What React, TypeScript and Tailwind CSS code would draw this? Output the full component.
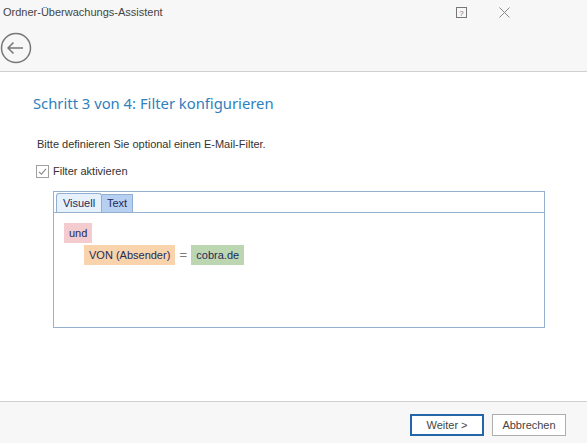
import React from "react";

export default function App() {
  const font = { fontFamily: '"Liberation Sans", Arial, sans-serif' };
  const head = { fontFamily: '"Noto Sans", "Liberation Sans", Arial, sans-serif' };
  return (
    <div className="w-[587px] h-[443px] flex flex-col bg-white text-[#333]" style={font}>
      {/* header */}
      <div className="h-[72px] bg-[#f7f7f7] border-b border-[#d0d0d0] flex flex-col shrink-0">
        <div className="h-[24px] flex items-center pl-[3px] relative">
          <span className="text-[11px] text-[#444] leading-none">Ordner-Überwachungs-Assistent</span>
          <div className="ml-auto flex items-center">
            <svg width="11" height="11" viewBox="0 0 11 11" className="mr-[32px]">
              <rect x="0.5" y="0.5" width="10" height="10" fill="none" stroke="#777" />
              <text x="5.5" y="8.7" textAnchor="middle" fontSize="8" fill="#777" fontFamily="Liberation Sans, sans-serif">?</text>
            </svg>
            <svg width="11" height="11" viewBox="0 0 11 11" className="mr-[77px]">
              <path d="M0.5 0.5 L10.5 10.5 M10.5 0.5 L0.5 10.5" stroke="#888" strokeWidth="1" />
            </svg>
          </div>
        </div>
        <div className="pl-[0px] pt-[8px]">
          <svg width="32" height="32" viewBox="0 0 32 32">
            <circle cx="16" cy="16" r="14.5" fill="none" stroke="#777" strokeWidth="1.5" />
            <path d="M8 16 H23 M13.5 10.5 L8 16 L13.5 21.5" fill="none" stroke="#777" strokeWidth="1.5" />
          </svg>
        </div>
      </div>

      {/* content */}
      <div className="flex-1 flex flex-col">
        <div className="pl-[33px] pt-[21px] text-[14.8px] text-[#2f80bd] leading-[20px]" style={head}>
          Schritt 3 von 4: Filter konfigurieren
        </div>
        <div className="pl-[37px] pt-[23px] text-[11px] leading-[16px] text-[#333]">
          Bitte definieren Sie optional einen E-Mail-Filter.
        </div>
        <div className="pl-[36px] pt-[11px] flex items-center gap-[4px]">
          <div className="w-[13px] h-[13px] border border-[#a0a0a0] bg-white flex items-center justify-center">
            <svg width="9" height="9" viewBox="0 0 9 9">
              <path d="M1 4.8 L3.4 7.2 L8 1.8" fill="none" stroke="#8a8a8a" strokeWidth="1.1" />
            </svg>
          </div>
          <span className="text-[11px] leading-[16px]">Filter aktivieren</span>
        </div>

        <div className="ml-[53px] mt-[12px] w-[492px] h-[137px] border border-[#94b1cf] flex flex-col">
          <div className="h-[21px] border-b border-[#94b1cf] flex items-end pl-[2px] bg-white">
            <div className="h-[19px] w-[46px] border border-b-0 border-[#8fb0d4] rounded-t-[3px] bg-[#e7f1fb] flex items-center justify-center text-[11px] text-[#1e2a5a]">
              Visuell
            </div>
            <div className="h-[18px] w-[31px] border border-b-0 border-l-0 border-[#8fb0d4] bg-[#b7cff0] flex items-center justify-center text-[11px] text-[#1e2a5a]">
              Text
            </div>
          </div>
          <div className="flex-1 pl-[10px] pt-[10px] flex flex-col text-[11px] text-[#1e2a5a]">
            <div className="flex">
              <div className="h-[20px] px-[5px] bg-[#f4cbcf] flex items-center">und</div>
            </div>
            <div className="flex items-center pl-[20px] mt-[2px]">
              <div className="h-[20px] px-[5px] bg-[#f9d3ab] flex items-center">VON (Absender)</div>
              <div className="w-[16px] flex justify-center text-[#7a7a7a] text-[13px]">=</div>
              <div className="h-[20px] px-[5px] bg-[#bcd6b1] flex items-center">cobra.de</div>
            </div>
          </div>
        </div>
      </div>

      {/* footer */}
      <div className="h-[42px] bg-[#f7f7f7] border-t border-[#d0d0d0] shrink-0 flex items-start justify-end pt-[12px] pr-[21px] gap-[8px]">
        <button className="w-[74px] h-[22px] border-2 border-[#2566a8] bg-white text-[11px] text-[#444] leading-none">
          Weiter &gt;
        </button>
        <button className="w-[74px] h-[22px] border border-[#adadad] bg-white text-[11px] text-[#444] leading-none">
          Abbrechen
        </button>
      </div>
    </div>
  );
}
